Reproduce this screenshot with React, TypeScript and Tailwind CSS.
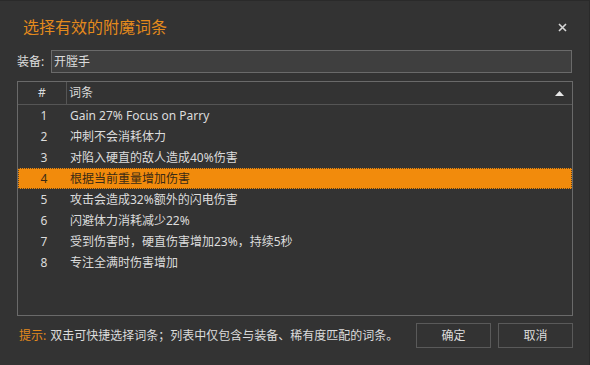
import React from "react";

const rows = [
  "Gain 27% Focus on Parry",
  "冲刺不会消耗体力",
  "对陷入硬直的敌人造成40%伤害",
  "根据当前重量增加伤害",
  "攻击会造成32%额外的闪电伤害",
  "闪避体力消耗减少22%",
  "受到伤害时，硬直伤害增加23%，持续5秒",
  "专注全满时伤害增加",
];

export default function App() {
  const font = { fontFamily: '"Noto Sans", "Noto Sans CJK SC", sans-serif' };
  return (
    <div
      className="w-[590px] h-[365px] bg-[#333333] border-t border-r border-[#2a2a2a] flex flex-col text-[#dcdcdc] overflow-hidden"
      style={font}
    >
      <div className="flex items-center justify-between pl-[23px] pr-[22px] pt-[13px] h-[38px]">
        <span className="text-[16px] leading-[24px] text-[#e48a1c]">选择有效的附魔词条</span>
        <svg width="9" height="9" viewBox="0 0 9 9" className="mt-[2px]">
          <path d="M1 1 L8 8 M8 1 L1 8" stroke="#d8d8d8" strokeWidth="1.6" />
        </svg>
      </div>
      <div className="flex items-center pl-[17px] pr-[17px] mt-[11px] h-[23px]">
        <span className="text-[12px] w-[34px] shrink-0">装备:</span>
        <div className="flex-1 h-[23px] bg-[#3f3f3f] border border-[#6a6a6a] flex items-center pl-[2px] text-[12px]">
          开膛手
        </div>
      </div>
      <div className="ml-[17px] mr-[16px] mt-[8px] h-[235px] border border-[#6a6a6a] flex flex-col">
        <div className="flex h-[23px] border-b border-[#555555] text-[12px] shrink-0">
          <div className="w-[49px] border-r border-[#555555] flex items-center justify-center">#</div>
          <div className="flex-1 flex items-center justify-between pl-[2px] pr-[8px]">
            <span>词条</span>
            <svg width="9" height="5" viewBox="0 0 9 5">
              <path d="M0 5 L4.5 0 L9 5 Z" fill="#e8e8e8" />
            </svg>
          </div>
        </div>
        {rows.map((r, i) => {
          const sel = i === 3;
          return (
            <div
              key={i}
              className={
                sel
                  ? "flex h-[21px] text-[12px] bg-[#f28b0c] text-[#3a2a15] border border-dotted border-[#5a4020]"
                  : "flex h-[21px] text-[12px] border border-transparent"
              }
            >
              <div className="w-[50px] flex items-center justify-center">{i + 1}</div>
              <div className="flex-1 flex items-center pl-[1px]">{r}</div>
            </div>
          );
        })}
      </div>
      <div className="flex items-center pl-[19px] pr-[16px] mt-[7px] h-[25px] text-[12px]">
        <span className="text-[#e48a1c]">提示:</span>
        <span className="ml-[4px] flex-1">双击可快捷选择词条；列表中仅包含与装备、稀有度匹配的词条。</span>
        <div className="w-[75px] h-[25px] border border-[#5a5a5a] flex items-center justify-center">确定</div>
        <div className="w-[75px] h-[25px] border border-[#5a5a5a] flex items-center justify-center ml-[7px]">取消</div>
      </div>
    </div>
  );
}
